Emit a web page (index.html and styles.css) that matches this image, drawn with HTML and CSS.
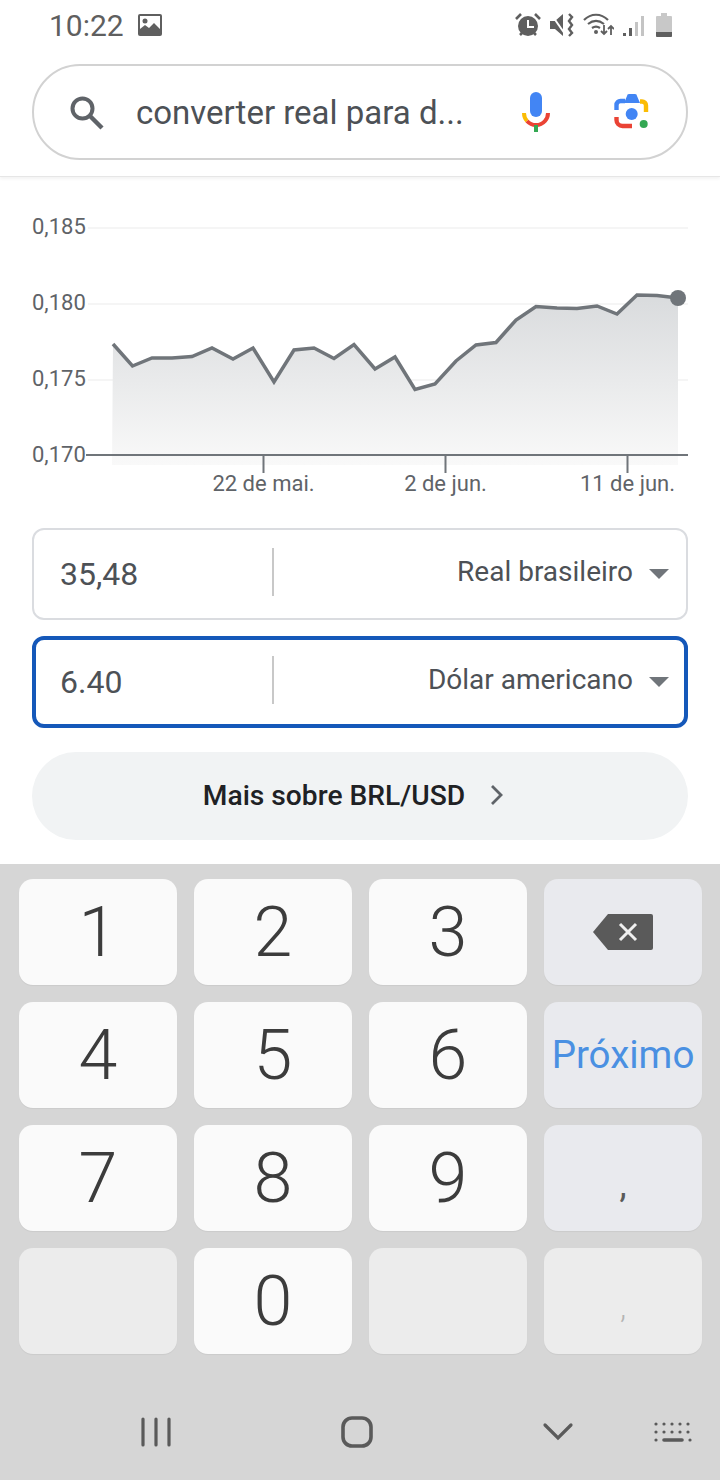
FILE: index.html
```html
<!DOCTYPE html>
<html>
<head>
    <meta charset="UTF-8">
    <title>converter real para dólar</title>
    <link rel="stylesheet" href="styles.css">
</head>
<body>
    <div class="status">
        <span class="clock">10:22</span>
        <svg class="pic" width="24" height="22" viewBox="0 0 24 22">
            <rect width="24" height="22" rx="2" fill="#5f5f5f"/>
            <rect x="2" y="2" width="20" height="18" fill="#fff"/>
            <circle cx="7" cy="7" r="2.5" fill="#5f5f5f"/>
            <path d="M2 20v-5l5-4 4 3 5-5 6 6v5z" fill="#5f5f5f"/>
        </svg>
        <div class="status-right">
            <svg width="26" height="24" viewBox="0 0 26 24">
                <circle cx="13" cy="13" r="10" fill="#5f5f5f"/>
                <path d="M13 7v7h6" fill="none" stroke="#fff" stroke-width="2"/>
                <path d="M1 6l5-5M25 6l-5-5M5 22l3-3M21 22l-3-3" stroke="#5f5f5f" stroke-width="2.6" fill="none"/>
            </svg>
            <svg width="24" height="24" viewBox="0 0 24 24">
                <path d="M0 8h5l8-7v22l-8-7H0z" fill="#5f5f5f"/>
                <path d="M1 1l14 20" stroke="#fff" stroke-width="2"/>
                <path d="M19 1l3 3-3 4 3 4-3 4 3 4-3 3" fill="none" stroke="#5f5f5f" stroke-width="2.4"/>
            </svg>
            <svg width="31" height="24" viewBox="0 0 31 24">
                <path d="M1 7c7-7 17-7 24 0M5 11c5-4 11-4 16 0M9 15c3-2 5-2 8 0" fill="none" stroke="#5f5f5f" stroke-width="2.2"/>
                <circle cx="13" cy="19" r="2" fill="#5f5f5f"/>
                <path d="M21 12v9M18 18l3 3 3-3M28 22v-9M25 16l3-3 3 3" fill="none" stroke="#5f5f5f" stroke-width="1.8"/>
            </svg>
            <svg class="signal" width="22" height="24" viewBox="0 0 22 24">
                <rect x="0" y="20" width="3" height="3" fill="#5f5f5f"/>
                <rect x="6" y="15" width="3" height="8" fill="#5f5f5f"/>
                <rect x="12" y="9" width="3" height="14" fill="#c4c4c4"/>
                <rect x="18" y="3" width="3" height="20" fill="#c4c4c4"/>
            </svg>
            <svg class="battery" width="16" height="24" viewBox="0 0 16 24">
                <path d="M5 0h6v3h4a1 1 0 0 1 1 1v19a1 1 0 0 1-1 1H1a1 1 0 0 1-1-1V4a1 1 0 0 1 1-1h4z" fill="#c8c8c8"/>
                <path d="M0 19h16v4a1 1 0 0 1-1 1H1a1 1 0 0 1-1-1z" fill="#5f5f5f"/>
            </svg>
        </div>
    </div>

    <div class="header">
        <div class="search">
            <svg class="search-icon" width="40" height="40" viewBox="0 0 40 40">
                <circle cx="16.5" cy="16.5" r="10" fill="none" stroke="#5f6368" stroke-width="4"/>
                <path d="M24 24l12 12" stroke="#5f6368" stroke-width="4.4"/>
            </svg>
            <span class="query">converter real para d...</span>
            <svg class="mic" width="30" height="42" viewBox="0 0 30 42">
                <rect x="9" y="1" width="12" height="25" rx="6" fill="#4285f4"/>
                <path d="M3 22a12 12 0 0 0 3 8" fill="none" stroke="#fbbc04" stroke-width="4"/>
                <path d="M6 30a12 12 0 0 0 18 0a12 12 0 0 0 3-8" fill="none" stroke="#ea4335" stroke-width="4"/>
                <rect x="13" y="34" width="4" height="7" fill="#34a853"/>
            </svg>
            <svg class="lens" width="40" height="40" viewBox="0 0 40 40">
                <path d="M4.5 18v-5a4 4 0 0 1 4-4h4.500" fill="none" stroke="#4285f4" stroke-width="4.400"/>
                <path d="M12 11l3-7a2 2 0 0 1 2-2h6a2 2 0 0 1 2 2l3 7z" fill="#4285f4"/>
                <path d="M28 9.500h2a4 4 0 0 1 4 4V20" fill="none" stroke="#fbbc04" stroke-width="4.400"/>
                <path d="M4.500 25v3a6 6 0 0 0 6 6H20" fill="none" stroke="#ea4335" stroke-width="4.400"/>
                <circle cx="19.700" cy="22" r="6" fill="#4285f4"/>
                <circle cx="31.700" cy="32" r="4" fill="#34a853"/>
            </svg>
        </div>
    </div>

    <div class="chart">
        <svg width="720" height="351" viewBox="0 177 720 351">
            <defs>
                <linearGradient id="area" x1="0" y1="0" x2="0" y2="1">
                    <stop offset="0" stop-color="#d9dbdd"/>
                    <stop offset="1" stop-color="#f9f9f9"/>
                </linearGradient>
            </defs>
            <path class="grid" d="M88 228H688M88 304H688M88 380H688"/>
            <path fill="url(#area)" d="M113 344L132.500 366L152 358L172 358L192 356.500L212 348L233 359L253 348L274 382L294 350L314 348L334 358.500L354 344.500L375 369L395 357L415 389.500L435 384L456 361L476 345L496 342.500L516 320L536 306.500L557 308L577 308.500L597 306L617 314L637 295L657 295.500L678 298V465H112Z"/>
            <path class="axis" d="M86 455H688M263.500 455V473M445.500 455V473M627.500 455V473"/>
            <polyline class="line" points="113,344 132.500,366 152,358 172,358 192,356.500 212,348 233,359 253,348 274,382 294,350 314,348 334,358.500 354,344.500 375,369 395,357 415,389.500 435,384 456,361 476,345 496,342.500 516,320 536,306.500 557,308 577,308.500 597,306 617,314 637,295 657,295.500 678,298"/>
            <circle cx="678" cy="298" r="8" fill="#70757a"/>
            <text class="label" x="32" y="234">0,185</text>
            <text class="label" x="32" y="310">0,180</text>
            <text class="label" x="32" y="386">0,175</text>
            <text class="label" x="32" y="462">0,170</text>
            <text class="label" x="263.500" y="491" text-anchor="middle">22 de mai.</text>
            <text class="label" x="445.500" y="491" text-anchor="middle">2 de jun.</text>
            <text class="label" x="675" y="491" text-anchor="end">11 de jun.</text>
        </svg>
    </div>

    <div class="field">
        <div class="amount">35,48</div>
        <div class="currency">
            <span>Real brasileiro</span>
            <i class="caret"></i>
        </div>
    </div>
    <div class="field active">
        <div class="amount">6.40</div>
        <div class="currency">
            <span>Dólar americano</span>
            <i class="caret"></i>
        </div>
    </div>

    <div class="more">
        <span>Mais sobre BRL/USD</span>
        <svg width="16" height="22" viewBox="0 0 16 22">
            <path d="M3 2l9 9-9 9" fill="none" stroke="#5f6368" stroke-width="2.800"/>
        </svg>
    </div>

    <div class="keyboard">
        <div class="keys">
            <div class="key">1</div>
            <div class="key">2</div>
            <div class="key">3</div>
            <div class="key side">
                <svg width="62" height="38" viewBox="0 0 62 38">
                    <path d="M16 1H59a2 2 0 0 1 2 2V35a2 2 0 0 1-2 2H16L1 19z" fill="#5a5a5a"/>
                    <path d="M28 11l16 16M44 11L28 27" stroke="#f1f1f1" stroke-width="3"/>
                </svg>
            </div>
            <div class="key">4</div>
            <div class="key">5</div>
            <div class="key">6</div>
            <div class="key side next">Próximo</div>
            <div class="key">7</div>
            <div class="key">8</div>
            <div class="key">9</div>
            <div class="key side comma">,</div>
            <div class="key off"></div>
            <div class="key">0</div>
            <div class="key off"></div>
            <div class="key off faint">,</div>
        </div>
        <div class="nav">
            <svg width="30" height="30" viewBox="0 0 30 30">
                <path d="M2 2V28M15 2V28M28 2V28" stroke="#5a5a5a" stroke-width="3.200" stroke-linecap="round"/>
            </svg>
            <svg width="34" height="34" viewBox="0 0 34 34">
                <rect x="3" y="3" width="28" height="28" rx="9" fill="none" stroke="#5a5a5a" stroke-width="3.600"/>
            </svg>
            <svg width="32" height="20" viewBox="0 0 32 20">
                <path d="M3 3l13 13L29 3" fill="none" stroke="#5a5a5a" stroke-width="3.200" stroke-linecap="round"/>
            </svg>
            <svg class="kb-icon" width="38" height="22" viewBox="0 0 38 22">
                <path d="M2 3H36M2 11H36" stroke="#5a5a5a" stroke-width="3.200" stroke-linecap="round" stroke-dasharray="0 8"/>
                <path d="M2 19h.01M36 19h.01" stroke="#5a5a5a" stroke-width="3.200" stroke-linecap="round"/>
                <path d="M10 19H28" stroke="#5a5a5a" stroke-width="3.600" stroke-linecap="round"/>
            </svg>
        </div>
    </div>
</body>
</html>
```

FILE: styles.css
```css
body {
    margin: 0;
    width: 720px;
    height: 1480px;
    overflow: hidden;
    background: #fff;
    font-family: Roboto, "Liberation Sans", sans-serif;
    color: #4d5156;
}

svg {
    display: block;
    flex: none;
}

.status {
    height: 50px;
    padding: 0 48px 0 49px;
    display: flex;
    align-items: center;
    box-sizing: border-box;
}

.clock {
    font-size: 30px;
    color: #5f5f5f;
}

.pic {
    margin-left: 14px;
}

.status-right {
    margin-left: auto;
    display: flex;
    align-items: center;
    gap: 9px;
}

.signal {
    margin-right: 2px;
}

.header {
    height: 127px;
    padding: 14px 32px 0;
    box-sizing: border-box;
    border-bottom: 1px solid #e6e6e6;
    box-shadow: 0 2px 3px rgba(0, 0, 0, 0.05);
}

.search {
    height: 96px;
    box-sizing: border-box;
    border: 2px solid #d2d2d2;
    border-radius: 48px;
    display: flex;
    align-items: center;
}

.search-icon {
    margin-left: 32px;
}

.query {
    margin-left: 30px;
    width: 385px;
    font-size: 33px;
    white-space: nowrap;
}

.lens {
    margin-left: 61px;
}

.chart {
    height: 351px;
}

.grid {
    stroke: #f5f5f5;
    stroke-width: 2;
    fill: none;
}

.axis {
    stroke: #70757a;
    stroke-width: 2;
    fill: none;
}

.line {
    stroke: #70757a;
    stroke-width: 3.500;
    fill: none;
}

.label {
    font-size: 22px;
    fill: #5f6368;
}

.field {
    height: 92px;
    margin: 0 32px 16px;
    box-sizing: border-box;
    border: 2px solid #dadce0;
    border-radius: 12px;
    display: flex;
    align-items: center;
}

.field.active {
    border: 4px solid #1558b9;
    margin-bottom: 24px;
}

.amount {
    width: 212px;
    height: 48px;
    margin: 0 0 4px 26px;
    border-right: 2px solid #c8c8c8;
    font-size: 32px;
    line-height: 52px;
}

.active .amount {
    margin-left: 24px;
}

.currency {
    flex: 1;
    display: flex;
    align-items: center;
    justify-content: flex-end;
    padding-right: 17px;
    font-size: 28px;
    position: relative;
    top: -3px;
}

.active .currency {
    padding-right: 15px;
}

.caret {
    width: 0;
    height: 0;
    margin-left: 16px;
    border-left: 10px solid transparent;
    border-right: 10px solid transparent;
    border-top: 10px solid #70757a;
    position: relative;
    top: 3px;
}

.more {
    height: 88px;
    margin: 0 32px 24px;
    padding: 0 12px 2px 0;
    box-sizing: border-box;
    border-radius: 44px;
    background: #f1f3f4;
    display: flex;
    align-items: center;
    justify-content: center;
    gap: 24px;
    font-size: 28.2px;
    font-weight: 500;
    color: #202124;
}

.keyboard {
    height: 616px;
    background: #d6d6d6;
    padding: 15px 18px 0 19px;
    box-sizing: border-box;
}

.keys {
    display: grid;
    grid-template-columns: repeat(4, 158px);
    grid-auto-rows: 106px;
    gap: 17px;
}

.key {
    border-radius: 14px;
    background: #fafafa;
    display: flex;
    align-items: center;
    justify-content: center;
    font-size: 70px;
    font-weight: 300;
    color: #3c3c3c;
    box-shadow: 0 1px 1px rgba(0, 0, 0, 0.05);
}

.side {
    background: #e9eaee;
}

.next {
    font-size: 38.5px;
    font-weight: 400;
    color: #4a90e2;
    padding-bottom: 2px;
    box-sizing: border-box;
}

.comma {
    font-size: 36px;
    font-weight: 400;
    color: #5a5a5a;
    padding-top: 14px;
    box-sizing: border-box;
}

.off {
    background: #ececec;
}

.faint {
    font-size: 32px;
    color: #b4b4b4;
    padding-top: 12px;
    box-sizing: border-box;
}

.nav {
    height: 126px;
    margin-left: 36px;
    display: grid;
    grid-template-columns: 201px 201px 201px 30px;
    justify-items: center;
    align-items: center;
    padding-top: 30px;
    box-sizing: border-box;
}

.kb-icon {
    justify-self: center;
}
```
